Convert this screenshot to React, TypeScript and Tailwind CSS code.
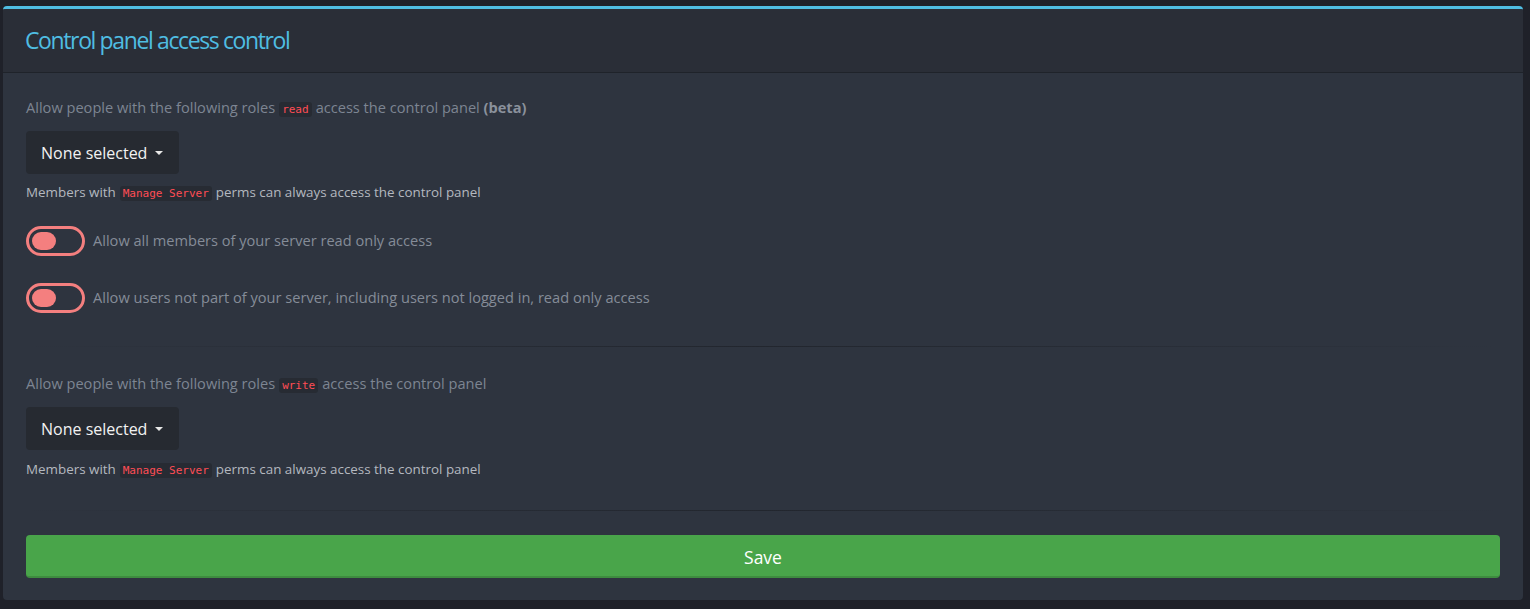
import React from "react";

const Code = ({ children }: { children: React.ReactNode }) => (
  <code className="mx-[4px] rounded-[3px] bg-[#272b33] px-[3px] py-[1px] text-[11px] text-[#ff4d55] [font-family:'DejaVu_Sans_Mono',monospace]">
    {children}
  </code>
);

const Dropdown = () => (
  <button className="flex h-[43px] w-[153px] items-center rounded-[4px] bg-[#262a31] pl-[15px] text-[16px] text-[#f2f2f2]">
    <span>None selected</span>
    <span className="ml-[8px] mt-[1px] h-0 w-0 border-x-[4px] border-t-[4px] border-x-transparent border-t-[#e8e8e8]" />
  </button>
);

const Toggle = ({ label }: { label: string }) => (
  <div className="flex items-center">
    <div className="flex h-[30px] w-[59px] items-center rounded-full border-[3px] border-[#f47f7f] pl-[3px]">
      <div className="h-[18px] w-[24px] rounded-full bg-[#f47f7f]" />
    </div>
    <span className="ml-[8px] text-[14.6px] text-[#858c98]">{label}</span>
  </div>
);

const Divider = () => (
  <div className="h-px w-full bg-gradient-to-r from-transparent via-[#22262e] to-transparent" />
);

export default function App() {
  return (
    <div className="min-h-[609px] bg-[#1f2129] pt-[6px] pl-[3px] [font-family:'Open_Sans',sans-serif]">
      <div className="w-[1520px] overflow-hidden rounded-[4px] border-t-[3px] border-[#4fbde2] bg-[#2e343f]">
        <div className="flex h-[64px] items-center border-b border-[#1f232a] bg-[#2a2e37] pl-[22px]">
          <h1 className="text-[23px] font-normal tracking-[-0.06em] text-[#4fbde2]">Control panel access control</h1>
        </div>
        <div className="flex flex-col px-[23px] pt-[24px] pb-[22px]">
          <p className="text-[14.6px] leading-[21px] text-[#7d8592]">
            Allow people with the following roles<Code>read</Code>access the control panel <b className="font-bold text-[#8a919c]">(beta)</b>
          </p>
          <div className="mt-[11px]">
            <Dropdown />
          </div>
          <p className="mt-[8px] text-[13.4px] leading-[20px] text-[#b4b8bf]">
            Members with<Code>Manage Server</Code>perms can always access the control panel
          </p>
          <div className="mt-[22px]">
            <Toggle label="Allow all members of your server read only access" />
          </div>
          <div className="mt-[27px]">
            <Toggle label="Allow users not part of your server, including users not logged in, read only access" />
          </div>
          <div className="mt-[33px]">
            <Divider />
          </div>
          <p className="mt-[26px] text-[14.6px] leading-[21px] text-[#7d8592]">
            Allow people with the following roles<Code>write</Code>access the control panel
          </p>
          <div className="mt-[11px]">
            <Dropdown />
          </div>
          <p className="mt-[9px] text-[13.4px] leading-[20px] text-[#b4b8bf]">
            Members with<Code>Manage Server</Code>perms can always access the control panel
          </p>
          <div className="mt-[29px]">
            <Divider />
          </div>
          <button className="mt-[24px] h-[43px] w-full rounded-[4px] border-b-2 border-[#3e8c3f] bg-[#49a54a] pt-[3px] text-[17.5px] text-white">
            Save
          </button>
        </div>
      </div>
    </div>
  );
}
